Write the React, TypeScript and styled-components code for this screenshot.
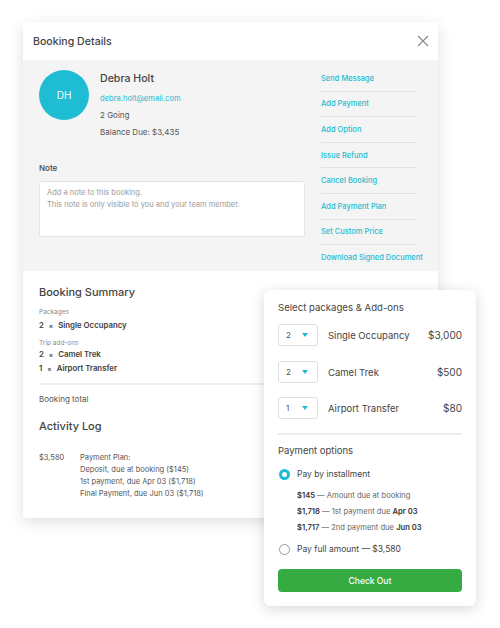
import styled, { createGlobalStyle } from "styled-components";

const GlobalStyle = createGlobalStyle`
  body {
    margin: 0;
    background: #ffffff;
    font-family: "Inter", "Open Sans", sans-serif;
    color: #3d3d3d;
  }
`;

const Stage = styled.div`
  position: relative;
  width: 500px;
  height: 628px;
  padding: 22px 0 0 23px;
  box-sizing: border-box;
`;

const Card = styled.div`
  width: 415px;
  height: 496px;
  background: #fff;
  box-shadow: 0 4px 14px rgba(0, 0, 0, 0.13);
  display: flex;
  flex-direction: column;
`;

const Header = styled.div`
  height: 38px;
  display: flex;
  align-items: center;
  justify-content: space-between;
  padding: 0 8px 0 10px;

  h2 {
    margin: 0;
    font-size: 10.6px;
    font-weight: 500;
    color: #444;
  }
`;

const Close = styled.button`
  border: 0;
  background: none;
  padding: 0;
  width: 14px;
  height: 14px;
  display: flex;
`;

const GraySection = styled.div`
  height: 211px;
  background: #f4f4f4;
  display: flex;
  gap: 16px;
  padding: 0 21px 0 16px;
`;

const LeftCol = styled.div`
  width: 266px;
  padding-top: 10px;
`;

const Profile = styled.div`
  display: flex;
  gap: 11px;
`;

const Avatar = styled.div`
  width: 50px;
  height: 50px;
  border-radius: 50%;
  background: #1ebdd3;
  color: #fff;
  font-size: 10px;
  display: flex;
  align-items: center;
  justify-content: center;
`;

const Info = styled.div`
  display: flex;
  flex-direction: column;
  font-size: 8px;
  color: #555;

  h3 {
    margin: 1px 0 3px;
    font-size: 10.6px;
    font-weight: 500;
    line-height: 16px;
    color: #444;
  }

  span {
    line-height: 17px;
  }
`;

const Email = styled.span`
  color: #22b8cf;
  font-size: 7.6px;
`;

const NoteLabel = styled.div`
  margin-top: 21px;
  font-size: 8px;
  font-weight: 500;
  color: #444;
  line-height: 12px;
`;

const NoteBox = styled.div`
  margin-top: 7px;
  height: 56px;
  background: #fff;
  border: 1px solid #e3e3e3;
  border-radius: 3px;
  box-sizing: border-box;
  padding: 5px 7px;
  font-size: 7.5px;
  line-height: 12px;
  color: #9a9a9a;
`;

const LinkCol = styled.div`
  width: 96px;
  padding-top: 6px;
  display: flex;
  flex-direction: column;
`;

const ActionLink = styled.a`
  height: 25.6px;
  display: flex;
  align-items: center;
  font-size: 7.5px;
  font-weight: 500;
  color: #25bcd2;
  white-space: nowrap;
  box-sizing: border-box;
  border-bottom: 1px solid #e2e2e2;

  &:last-child {
    border-bottom: 0;
  }
`;

const Summary = styled.div`
  padding: 14px 21px 0 16px;
`;

const SectionTitle = styled.h3`
  margin: 0;
  font-size: 11px;
  font-weight: 500;
  line-height: 14px;
  color: #444;
`;

const SmallLabel = styled.div<{ $top: number; $bottom: number }>`
  margin: ${(p) => p.$top}px 0 ${(p) => p.$bottom}px;
  font-size: 6.5px;
  color: #8a8a8a;
  line-height: 10px;
`;

const ItemLine = styled.div`
  font-size: 7.8px;
  font-weight: 600;
  color: #3d3d3d;
  line-height: 12.4px;

  i {
    font-style: normal;
    font-size: 6.5px;
    margin: 0 5px;
  }
`;

const Divider = styled.div`
  margin-top: 8px;
  height: 2px;
  background: #efefef;
`;

const TotalLabel = styled.div`
  margin-top: 8px;
  font-size: 8px;
  color: #555;
  line-height: 12px;
`;

const ActivityTitle = styled(SectionTitle)`
  margin-top: 14px;
`;

const LogRow = styled.div`
  margin-top: 19px;
  display: flex;
  font-size: 7.5px;
  line-height: 12px;
  color: #555;
`;

const LogAmount = styled.div`
  width: 41px;
`;

const Popup = styled.div`
  position: absolute;
  left: 264px;
  top: 290px;
  width: 212px;
  height: 316px;
  box-sizing: border-box;
  background: #fff;
  border-radius: 6px;
  box-shadow: 0 3px 14px rgba(0, 0, 0, 0.16);
  padding: 11px 14px 14px;
  display: flex;
  flex-direction: column;
`;

const PopTitle = styled.div`
  font-size: 9.6px;
  font-weight: 400;
  color: #444;
  line-height: 14px;
`;

const PackageRow = styled.div<{ $top: number }>`
  margin-top: ${(p) => p.$top}px;
  display: flex;
  align-items: center;
  height: 22px;
`;

const Select = styled.div`
  width: 40px;
  height: 22px;
  box-sizing: border-box;
  border: 1px solid #dedede;
  border-radius: 3px;
  display: flex;
  align-items: center;
  justify-content: space-between;
  padding: 0 9px 0 7px;
  font-size: 8px;
  color: #555;
`;

const Caret = styled.span`
  width: 0;
  height: 0;
  border-left: 3.5px solid transparent;
  border-right: 3.5px solid transparent;
  border-top: 4px solid #1ebcd4;
`;

const PackageName = styled.div`
  flex: 1;
  margin-left: 10px;
  font-size: 9.5px;
  color: #444;
`;

const Price = styled.div`
  font-size: 10px;
  color: #444;
`;

const PopDivider = styled.div`
  margin-top: 14px;
  height: 2px;
  background: #eeeeee;
`;

const OptionsTitle = styled.div`
  margin-top: 9px;
  font-size: 9.5px;
  color: #444;
  line-height: 14px;
`;

const RadioRow = styled.div<{ $top: number }>`
  margin-top: ${(p) => p.$top}px;
  display: flex;
  align-items: center;
  gap: 7px;
  font-size: 8.5px;
  color: #444;
  line-height: 12px;
`;

const Radio = styled.span<{ $checked?: boolean }>`
  width: 11px;
  height: 11px;
  margin-left: 1px;
  border-radius: 50%;
  box-sizing: border-box;
  border: ${(p) => (p.$checked ? "3.5px solid #1ebcd4" : "1px solid #9a9a9a")};
  background: #fff;
`;

const InstallList = styled.div`
  margin: 10px 0 0 19px;
  display: flex;
  flex-direction: column;
  gap: 4px;
  font-size: 7.6px;
  line-height: 12px;
  color: #666;

  b {
    color: #333;
    font-weight: 600;
  }
`;

const CheckOut = styled.button`
  margin-top: 14px;
  height: 23px;
  border: 0;
  border-radius: 4px;
  background: #36ab41;
  color: #fff;
  font-family: inherit;
  font-size: 8.5px;
  font-weight: 500;
`;

const links = [
  "Send Message",
  "Add Payment",
  "Add Option",
  "Issue Refund",
  "Cancel Booking",
  "Add Payment Plan",
  "Set Custom Price",
  "Download Signed Document",
];

const packages = [
  { qty: 2, name: "Single Occupancy", price: "$3,000", top: 9 },
  { qty: 2, name: "Camel Trek", price: "$500", top: 15 },
  { qty: 1, name: "Airport Transfer", price: "$80", top: 14 },
];

const App: React.FC = () => {
  return (
    <Stage>
      <GlobalStyle />
      <Card>
        <Header>
          <h2>Booking Details</h2>
          <Close aria-label="Close">
            <svg width="14" height="14" viewBox="0 0 14 14">
              <path d="M2 2L12 12M12 2L2 12" stroke="#8a8a8a" strokeWidth="1.2" />
            </svg>
          </Close>
        </Header>
        <GraySection>
          <LeftCol>
            <Profile>
              <Avatar>DH</Avatar>
              <Info>
                <h3>Debra Holt</h3>
                <Email>debra.holt@email.com</Email>
                <span>2 Going</span>
                <span>Balance Due: $3,435</span>
              </Info>
            </Profile>
            <NoteLabel>Note</NoteLabel>
            <NoteBox>
              Add a note to this booking.
              <br />
              This note is only visible to you and your team member.
            </NoteBox>
          </LeftCol>
          <LinkCol>
            {links.map((l) => (
              <ActionLink key={l}>{l}</ActionLink>
            ))}
          </LinkCol>
        </GraySection>
        <Summary>
          <SectionTitle>Booking Summary</SectionTitle>
          <SmallLabel $top={8} $bottom={2}>Packages</SmallLabel>
          <ItemLine>
            2<i>×</i>Single Occupancy
          </ItemLine>
          <SmallLabel $top={6} $bottom={0}>Trip add-ons</SmallLabel>
          <ItemLine>
            2<i>×</i>Camel Trek
          </ItemLine>
          <ItemLine>
            1<i>×</i>Airport Transfer
          </ItemLine>
          <Divider />
          <TotalLabel>Booking total</TotalLabel>
          <ActivityTitle>Activity Log</ActivityTitle>
          <LogRow>
            <LogAmount>$3,580</LogAmount>
            <div>
              Payment Plan:
              <br />
              Deposit, due at booking ($145)
              <br />
              1st payment, due Apr 03 ($1,718)
              <br />
              Final Payment, due Jun 03 ($1,718)
            </div>
          </LogRow>
        </Summary>
      </Card>

      <Popup>
        <PopTitle>Select packages &amp; Add-ons</PopTitle>
        {packages.map((p) => (
          <PackageRow key={p.name} $top={p.top}>
            <Select>
              {p.qty}
              <Caret />
            </Select>
            <PackageName>{p.name}</PackageName>
            <Price>{p.price}</Price>
          </PackageRow>
        ))}
        <PopDivider />
        <OptionsTitle>Payment options</OptionsTitle>
        <RadioRow $top={10}>
          <Radio $checked />
          Pay by installment
        </RadioRow>
        <InstallList>
          <span>
            <b>$145</b> — Amount due at booking
          </span>
          <span>
            <b>$1,718</b> — 1st payment due <b>Apr 03</b>
          </span>
          <span>
            <b>$1,717</b> — 2nd payment due <b>Jun 03</b>
          </span>
        </InstallList>
        <RadioRow $top={9}>
          <Radio />
          Pay full amount — $3,580
        </RadioRow>
        <CheckOut>Check Out</CheckOut>
      </Popup>
    </Stage>
  );
};

export default App;
